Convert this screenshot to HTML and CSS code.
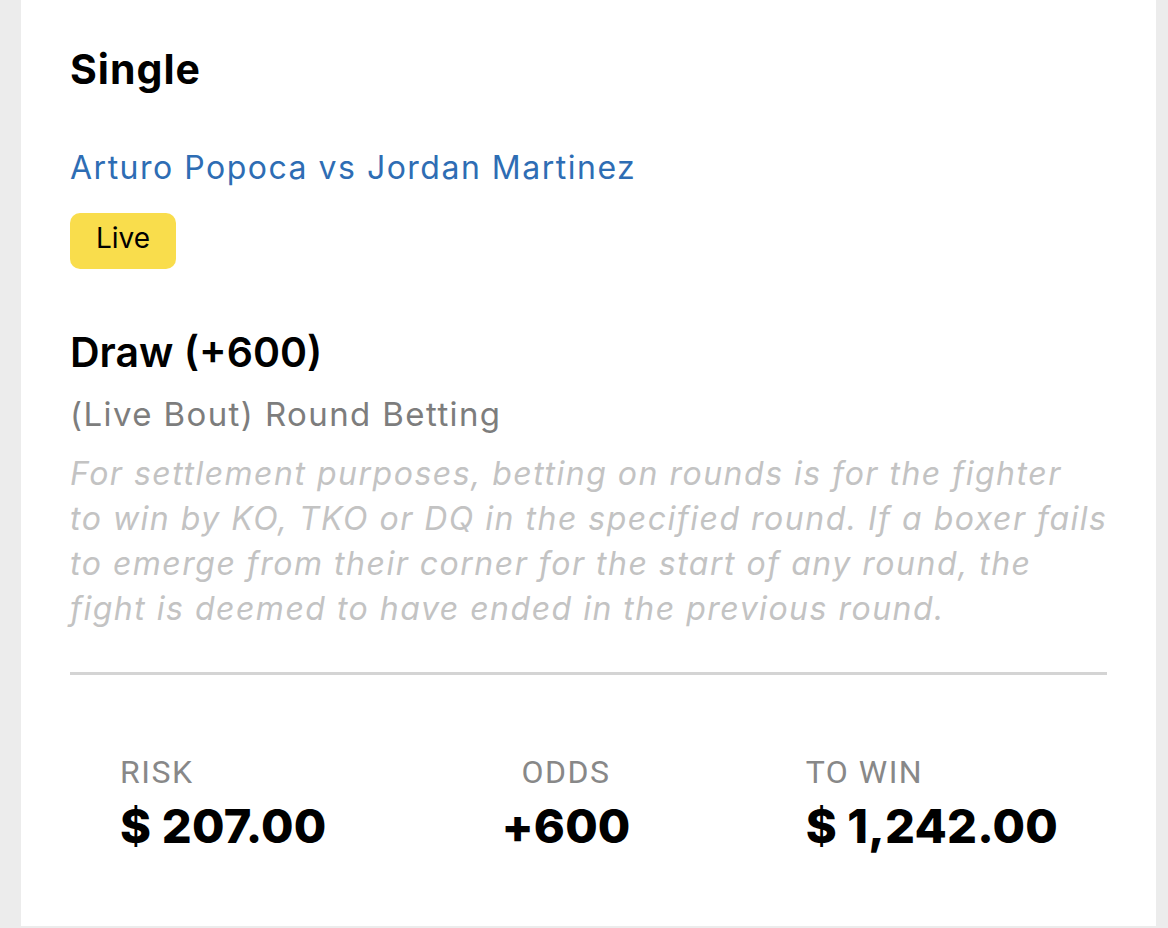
FILE: index.html
```html
<!DOCTYPE html>
<html>
<head>
<meta charset="utf-8">
<link rel="stylesheet" href="styles.css">
</head>
<body>
<main class="card">
  <h1 class="title">Single</h1>
  <a class="match">Arturo Popoca vs Jordan Martinez</a>
  <div class="badge-row"><span class="badge">Live</span></div>
  <h2 class="pick">Draw (+600)</h2>
  <div class="market">(Live Bout) Round Betting</div>
  <p class="rules">For settlement purposes, betting on rounds is for the fighter<br>to win by KO, TKO or DQ in the specified round. If a boxer fails<br>to emerge from their corner for the start of any round, the<br>fight is deemed to have ended in the previous round.</p>
  <hr class="divider">
  <div class="stats">
    <div class="stat">
      <span class="label">RISK</span>
      <span class="value">$ 207.00</span>
    </div>
    <div class="stat stat-center">
      <span class="label">ODDS</span>
      <span class="value">+600</span>
    </div>
    <div class="stat">
      <span class="label">TO WIN</span>
      <span class="value">$ 1,242.00</span>
    </div>
  </div>
</main>
</body>
</html>
```

FILE: styles.css
```css
html, body {
  margin: 0;
  padding: 0;
  background: #ececec;
}
body {
  font-family: "Inter", "Roboto", sans-serif;
  color: #000;
}
.card {
  margin: 0 12px 0 21px;
  background: #fff;
  height: 926px;
  box-sizing: border-box;
  padding: 45px 49px 0 49px;
}
.title {
  margin: 0;
  font-size: 41px;
  font-weight: 700;
  line-height: 48px;
  letter-spacing: 1px;
}
.match {
  display: block;
  margin-top: 55px;
  color: #2e6db4;
  font-size: 32px;
  line-height: 40px;
  letter-spacing: 1.5px;
}
.badge-row {
  margin-top: 25px;
  height: 56px;
}
.badge {
  display: inline-block;
  background: #f9dd4c;
  border-radius: 10px;
  line-height: 50px;
  padding: 0 26px 6px;
  font-size: 28px;
}
.pick {
  margin: 59px 0 0;
  font-size: 41px;
  font-weight: 600;
  line-height: 48px;
}
.market {
  margin-top: 16px;
  color: #7d7d7d;
  font-size: 33px;
  line-height: 44px;
  letter-spacing: 1.4px;
}
.rules {
  margin: 15px 0 0;
  color: #c3c3c3;
  font-style: italic;
  font-size: 32px;
  line-height: 45px;
  letter-spacing: 1.5px;
  white-space: nowrap;
}
.divider {
  margin: 41px 0 0;
  border: 0;
  height: 3px;
  background: #d4d4d4;
}
.stats {
  display: flex;
  justify-content: space-between;
  padding: 77px 49px 0 50px;
}
.stat {
  display: flex;
  flex-direction: column;
  align-items: flex-start;
}
.stat-center {
  align-items: center;
}
.label {
  font-family: "Roboto", sans-serif;
  color: #888;
  font-size: 32px;
  line-height: 40px;
  letter-spacing: 1.5px;
}
.value {
  margin-top: 6px;
  font-weight: 800;
  font-size: 47px;
  line-height: 56px;
  letter-spacing: 0.2px;
}
```
